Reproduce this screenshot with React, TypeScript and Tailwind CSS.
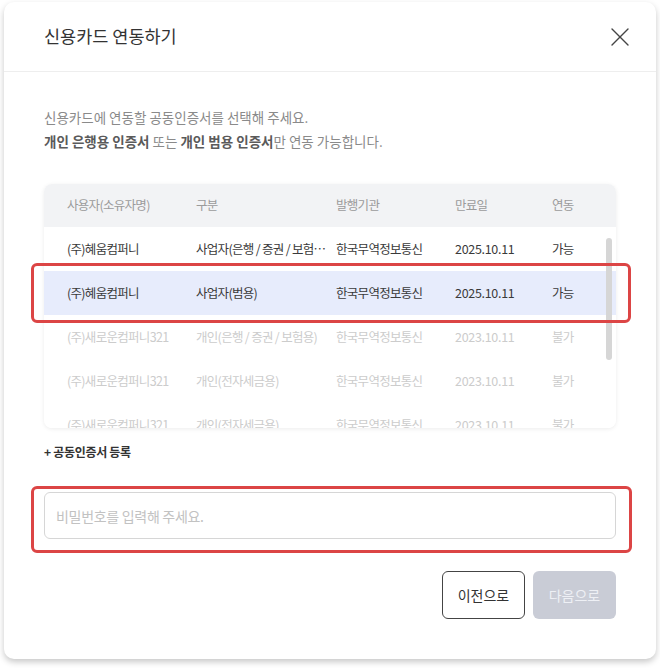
import { X } from 'lucide-react';

type Row = {
  owner: string;
  kind: string;
  issuer: string;
  expires: string;
  status: string;
  enabled: boolean;
  selected?: boolean;
};

const rows: Row[] = [
  { owner: '(주)혜움컴퍼니', kind: '사업자(은행 / 증권 / 보험…', issuer: '한국무역정보통신', expires: '2025.10.11', status: '가능', enabled: true },
  { owner: '(주)혜움컴퍼니', kind: '사업자(범용)', issuer: '한국무역정보통신', expires: '2025.10.11', status: '가능', enabled: true, selected: true },
  { owner: '(주)새로운컴퍼니321', kind: '개인(은행 / 증권 / 보험용)', issuer: '한국무역정보통신', expires: '2023.10.11', status: '불가', enabled: false },
  { owner: '(주)새로운컴퍼니321', kind: '개인(전자세금용)', issuer: '한국무역정보통신', expires: '2023.10.11', status: '불가', enabled: false },
  { owner: '(주)새로운컴퍼니321', kind: '개인(전자세금용)', issuer: '한국무역정보통신', expires: '2023.10.11', status: '불가', enabled: false },
];

const cols = 'grid grid-cols-[129px_140px_119px_97px_1fr] pl-[23px] items-center';

export default function App() {
  return (
    <div className="min-h-[668px] bg-white pt-[2px] px-[4px] font-['Noto_Sans_CJK_KR','Noto_Sans',sans-serif]">
      <div className="relative w-[652px] h-[657px] bg-white rounded-[10px] shadow-[0_3px_6px_rgba(0,0,0,0.22)]">
        {/* 헤더 */}
        <div className="h-[70px] flex items-center justify-between pl-[40px] pr-[20px] border-b border-[#eeeeee]">
          <h1 className="text-[17.5px] text-[#333]">신용카드 연동하기</h1>
          <X className="w-[32px] h-[32px] text-[#444]" strokeWidth={1.05} />
        </div>

        <div className="pt-[33px] px-[40px]">
          {/* 안내 */}
          <p className="text-[13.5px] leading-[24px] text-[#8a8a8a]">
            신용카드에 연동할 공동인증서를 선택해 주세요.
            <br />
            <b className="font-bold text-[#5a5a5a]">개인 은행용 인증서</b> 또는{' '}
            <b className="font-bold text-[#5a5a5a]">개인 범용 인증서</b>만 연동 가능합니다.
          </p>

          {/* 인증서 목록 */}
          <div className="relative mt-[31px] h-[244px] rounded-[8px] overflow-hidden shadow-[0_1px_4px_rgba(0,0,0,0.08)] text-[12.5px] tracking-[-0.7px]">
            <div className={`${cols} h-[43px] bg-[#f2f3f5] text-[#9b9b9b]`}>
              <span>사용자(소유자명)</span>
              <span>구분</span>
              <span>발행기관</span>
              <span>만료일</span>
              <span>연동</span>
            </div>
            {rows.map((r, i) => (
              <div
                key={i}
                className={`${cols} h-[44px] ${r.selected ? 'bg-[#e7ecfc]' : 'bg-white'} ${r.enabled ? 'text-[#3a3a3a]' : 'text-[#cccccc]'}`}
              >
                <span>{r.owner}</span>
                <span className="whitespace-nowrap">{r.kind}</span>
                <span>{r.issuer}</span>
                <span className="tracking-[-0.3px]">{r.expires}</span>
                <span>{r.status}</span>
              </div>
            ))}
            {/* 스크롤바 */}
            <div className="absolute left-[562px] top-[54px] w-[6px] h-[122px] rounded-full bg-[#d6d6d6]" />
          </div>

          <button className="mt-[15px] text-[12px] font-bold text-[#333] tracking-[-0.3px]">+ 공동인증서 등록</button>

          {/* 비밀번호 */}
          <input
            type="password"
            placeholder="비밀번호를 입력해 주세요."
            className="mt-[30px] block w-[572px] h-[47px] rounded-[6px] border border-[#d6d6d6] px-[11px] text-[14px] tracking-[-0.3px] placeholder:text-[#c2c2c2] outline-none"
          />

          <div className="mt-[32px] flex justify-end gap-[8px] w-[572px]">
            <button className="w-[83px] h-[48px] rounded-[6px] border border-[#444] text-[14px] text-[#333]">이전으로</button>
            <button className="w-[83px] h-[48px] rounded-[6px] bg-[#c9ccd6] text-[14px] text-[#eef0f5]">다음으로</button>
          </div>
        </div>

        {/* 강조 표시 */}
        <div className="absolute left-[27px] top-[261px] w-[600px] h-[60px] rounded-[6px] border-[3px] border-[#dc4545]" />
        <div className="absolute left-[27px] top-[484px] w-[601px] h-[67px] rounded-[6px] border-[3px] border-[#dc4545]" />
      </div>
    </div>
  );
}
